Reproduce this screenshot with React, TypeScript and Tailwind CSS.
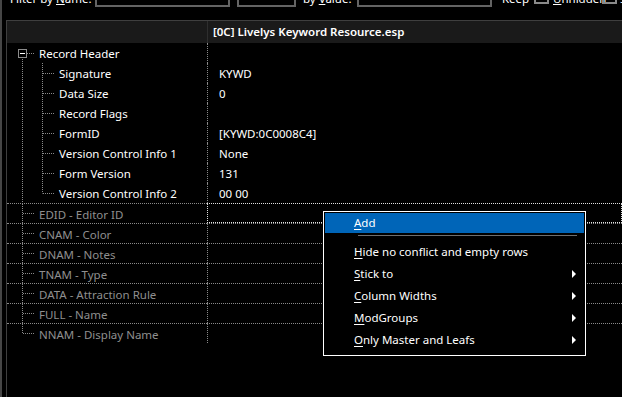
import React from "react"

const FONT = { fontFamily: '"Noto Sans", "Open Sans", Arial, sans-serif' }
const DOT = "#8a8a8a"

type Row = {
  name: string
  value?: string
  level: 0 | 1 | 2
  last?: boolean
  grid?: boolean
  focus?: boolean
}

const rows: Row[] = [
  { name: "Record Header", level: 0 },
  { name: "Signature", value: "KYWD", level: 2 },
  { name: "Data Size", value: "0", level: 2 },
  { name: "Record Flags", level: 2 },
  { name: "FormID", value: "[KYWD:0C0008C4]", level: 2 },
  { name: "Version Control Info 1", value: "None", level: 2 },
  { name: "Form Version", value: "131", level: 2 },
  { name: "Version Control Info 2", value: "00 00", level: 2, last: true },
  { name: "EDID - Editor ID", level: 1, grid: true, focus: true },
  { name: "CNAM - Color", level: 1, grid: true },
  { name: "DNAM - Notes", level: 1, grid: true },
  { name: "TNAM - Type", level: 1, grid: true },
  { name: "DATA - Attraction Rule", level: 1, grid: true },
  { name: "FULL - Name", level: 1, grid: true },
  { name: "NNAM - Display Name", level: 1, grid: true, last: true },
]

function Tree({ row }: { row: Row }) {
  const h = row.grid ? 19 : 20
  const o = row.grid ? -1 : 0
  const dash = { stroke: DOT, strokeWidth: 1, strokeDasharray: "1 1" }
  if (row.level === 0) {
    return (
      <svg width={32} height={h} className="shrink-0 self-start">
        <rect x={11.5} y={6.5 + o} width={8} height={8} fill="#000" stroke="#8c8c8c" />
        <line x1={13} y1={10.5 + o} x2={18} y2={10.5 + o} stroke="#fff" />
        <line x1={20} y1={10.5 + o} x2={28} y2={10.5 + o} {...dash} />
        <line x1={15.5} y1={16 + o} x2={15.5} y2={h} {...dash} />
      </svg>
    )
  }
  if (row.level === 1) {
    return (
      <svg width={32} height={h} className="shrink-0 self-start">
        <line x1={15.5} y1={0} x2={15.5} y2={row.last ? 10.5 + o : h} {...dash} />
        <line x1={16} y1={10.5 + o} x2={28} y2={10.5 + o} {...dash} />
      </svg>
    )
  }
  return (
    <svg width={52} height={h} className="shrink-0 self-start">
      <line x1={15.5} y1={0} x2={15.5} y2={h} {...dash} />
      <line x1={35.5} y1={0} x2={35.5} y2={row.last ? 10.5 + o : h} {...dash} />
      <line x1={36} y1={10.5 + o} x2={48} y2={10.5 + o} {...dash} />
    </svg>
  )
}

function TreeRow({ row }: { row: Row }) {
  const color = row.level === 1 ? "text-[#8f8f8f]" : "text-white"
  return (
    <div className="flex h-[20px] text-[11.5px] leading-[16px]">
      <div
        className={`flex w-[200px] shrink-0 items-center ${color} ${
          row.grid ? "border-t border-dotted border-[#8a8a8a]" : ""
        }`}
      >
        <Tree row={row} />
        <span className="mt-[2px] whitespace-nowrap">{row.name}</span>
      </div>
      <div
        className={`flex flex-1 items-center pl-[11px] text-white border-l border-dotted ${
          row.focus
            ? "border border-[#e0e0e0]"
            : row.grid
              ? "border-t border-[#8a8a8a]"
              : "border-[#8a8a8a]"
        }`}
      >
        <span className="mt-[2px] whitespace-nowrap">{row.value}</span>
      </div>
    </div>
  )
}

function Arrow() {
  return (
    <svg width={5} height={8} className="shrink-0">
      <polygon points="0,0 4,4 0,8" fill="#fff" />
    </svg>
  )
}

function MenuItem({ k, rest, sub }: { k: string; rest: string; sub?: boolean }) {
  return (
    <div className="flex h-[22px] items-center pl-[29px] pr-[7px]">
      <span className="flex-1 whitespace-nowrap">
        <span className="underline underline-offset-2">{k}</span>
        {rest}
      </span>
      {sub && <Arrow />}
    </div>
  )
}

function ContextMenu() {
  return (
    <div
      className="absolute left-[323px] top-[211px] w-[263px] border border-white bg-black p-px pb-[4px] text-[11.5px] leading-[16px] text-white"
      style={FONT}
    >
      <div className="flex h-[20px] items-center bg-[#0065b8] pl-[29px]">
        <span className="underline underline-offset-2">A</span>dd
      </div>
      <div className="pl-[33px] pr-[7px] pt-[2px] pb-[5px]">
        <div className="h-px bg-[#6e6e6e]" />
      </div>
      <MenuItem k="H" rest="ide no conflict and empty rows" />
      <MenuItem k="S" rest="tick to" sub />
      <MenuItem k="C" rest="olumn Widths" sub />
      <MenuItem k="M" rest="odGroups" sub />
      <MenuItem k="O" rest="nly Master and Leafs" sub />
    </div>
  )
}

function FilterBar() {
  return (
    <div className="h-[20px] overflow-hidden">
      <div className="-mt-[14px] flex h-[21px] items-start text-[11.5px] leading-[16px] text-white">
        <span className="ml-[8px] mt-[5px] w-[78px] shrink-0 whitespace-nowrap">
          Filter by <span className="underline">N</span>ame:
        </span>
        <div className="ml-[7px] h-[21px] w-[135px] shrink-0 border-2 border-[#646464]" />
        <div className="ml-[7px] h-[21px] w-[59px] shrink-0 border-2 border-[#646464]" />
        <span className="ml-[7px] mt-[5px] w-[47px] shrink-0 whitespace-nowrap">
          by <span className="underline">V</span>alue:
        </span>
        <div className="ml-[7px] h-[21px] w-[135px] shrink-0 border-2 border-[#646464]" />
        <span className="ml-[10px] mt-[5px] w-[26px] shrink-0">Keep</span>
        <div className="ml-[6px] mt-[3px] h-[15px] w-[15px] shrink-0 border-2 border-[#8a8a8a]" />
        <span className="ml-[4px] mt-[5px] w-[45px] shrink-0 whitespace-nowrap">
          <span className="underline">U</span>nhidden
        </span>
        <div className="ml-[4px] mt-[3px] h-[15px] w-[15px] shrink-0 border-2 border-[#8a8a8a]" />
        <span className="ml-[3px] mt-[5px] shrink-0">S</span>
      </div>
    </div>
  )
}

export default function App() {
  return (
    <div className="relative flex h-[397px] w-[622px] overflow-hidden bg-black" style={FONT}>
      <div className="w-[2px] shrink-0 bg-[#464646]" />
      <div className="flex min-w-0 flex-1 flex-col">
        <FilterBar />
        <div className="ml-[4px] flex-1 border-l border-t border-[#3f3f3f]">
          <div className="flex h-[22px] bg-[#1a1a1a] text-[11.5px] leading-[16px] text-white">
            <div className="w-[200px] shrink-0" />
            <div className="flex flex-1 items-center border-l border-[#2e2e2e] pl-[5px] font-semibold whitespace-nowrap">
              [0C] Livelys Keyword Resource.esp
            </div>
          </div>
          {rows.map((r) => (
            <TreeRow key={r.name} row={r} />
          ))}
        </div>
      </div>
      <ContextMenu />
    </div>
  )
}
